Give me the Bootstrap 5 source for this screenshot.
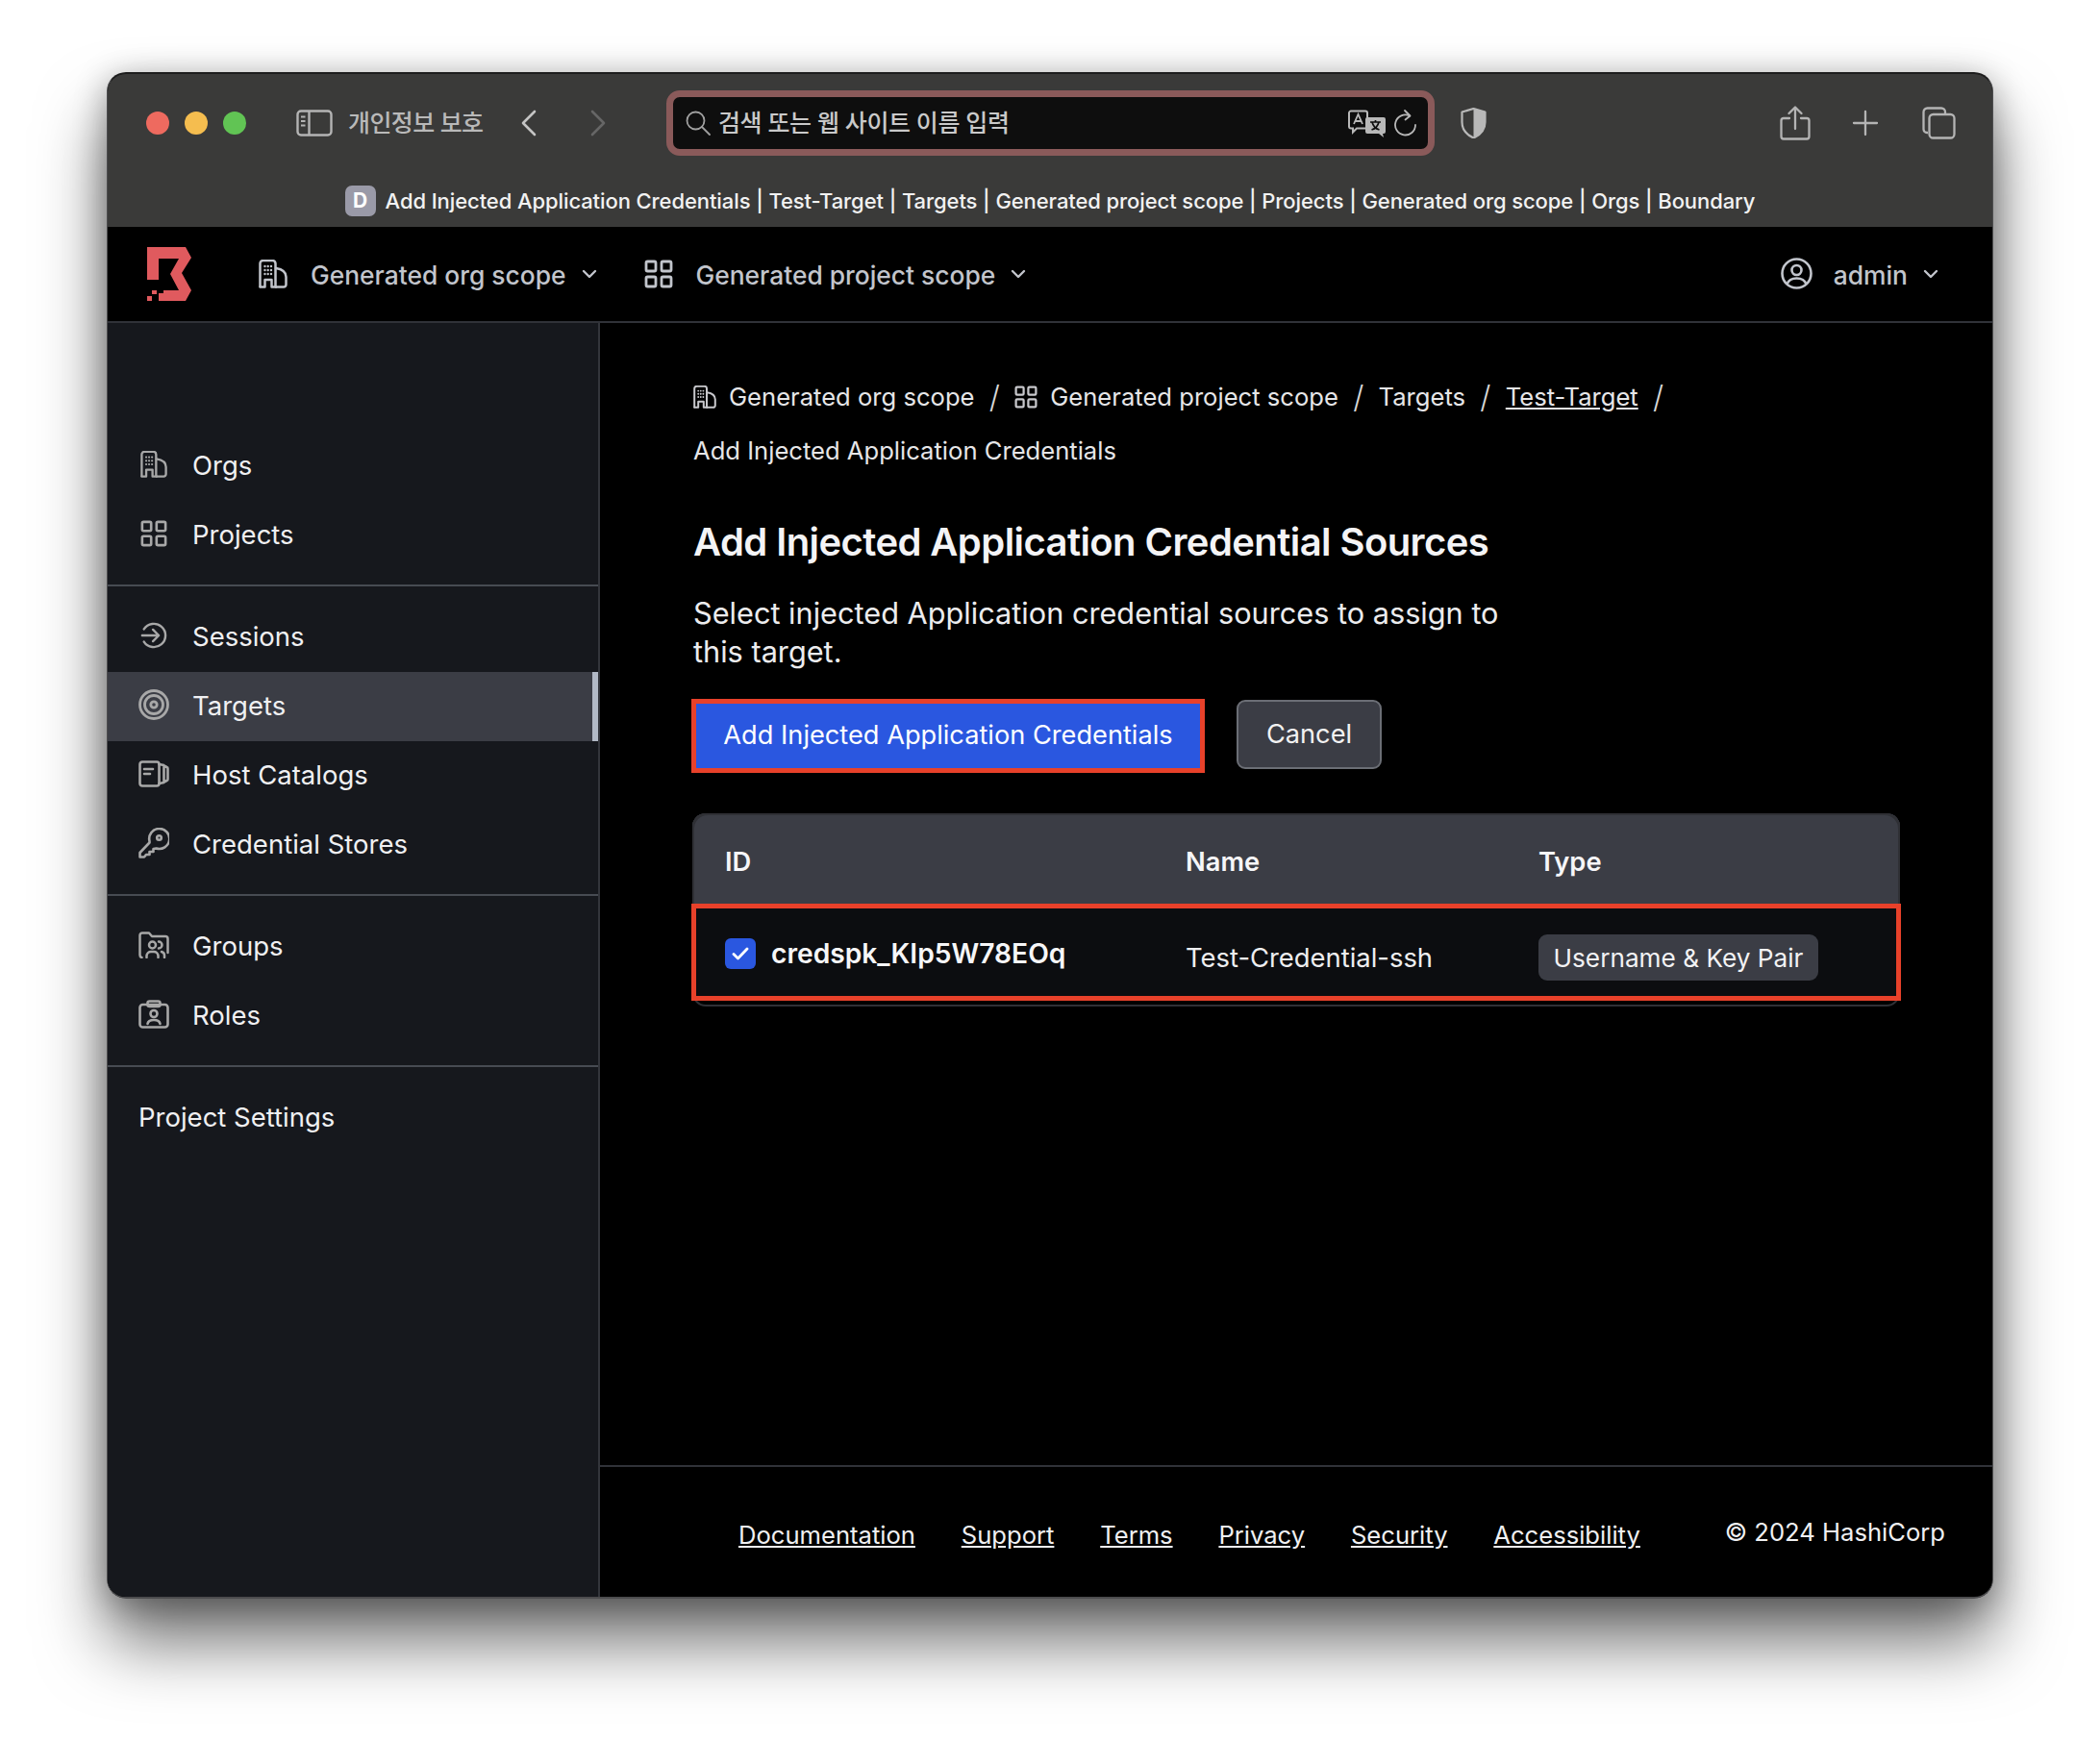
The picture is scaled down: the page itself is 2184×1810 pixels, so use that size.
<!DOCTYPE html>
<html lang="en">
<head>
  <meta charset="UTF-8" />
  <title>Add Injected Application Credentials</title>
  <link href="https://cdn.jsdelivr.net/npm/bootstrap@5.3.0/dist/css/bootstrap.min.css" rel="stylesheet"/>
  <style>
    html, body { height: 100%; }
    body { background: #fff; font-family: Inter, "Noto Sans CJK KR", sans-serif; padding: 75px 111px 0; overflow: hidden; }
    svg { flex: none; display: block; }
    .win { height: 1588px; border: 1px solid #4c4c4e; border-width: 2px 1px; border-top-color: #1d1d1d; border-radius: 20px; overflow: hidden; display: flex; flex-direction: column; background: #000; }
    .win-wrap { border-radius: 20px; box-shadow: 0 46px 70px rgba(0,0,0,.55), 0 6px 34px rgba(0,0,0,.32); }

    .toolbar { height: 159px; flex: none; background: #3a3a39; padding: 17px 0 0 40px; }
    .tool-row { height: 68px; }
    .light { width: 24px; height: 24px; border-radius: 50%; margin-right: 16px; }
    .side-toggle { margin-left: 36px; }
    .privacy { color: #b9b9b9; font-size: 25px; font-weight: 500; margin: 0 38px 0 16px; padding-top: 2px; letter-spacing: -.6px; width: 141px; white-space: nowrap; }
    .addr { width: 799px; height: 68px; margin: 0 27px 0 62px; background: #0e0e0e; border: 7px solid #8a5a5a; border-radius: 14px; padding: 0 11px 0 13px; color: #c9c9c9; font-size: 25px; font-weight: 500; letter-spacing: -.4px; }
    .addr span { padding-top: 2px; }
    .title-row { height: 32px; margin: 31px 0 0 -40px; color: #f2f2f2; font-size: 22px; font-weight: 500; letter-spacing: -.09px; white-space: nowrap; }
    .fav { width: 32px; height: 32px; border-radius: 7px; background: #9a9aa8; color: #fff; font-size: 21px; font-weight: 700; margin-right: 10px; }

    .topnav { height: 100px; flex: none; background: #000; border-bottom: 2px solid #303238; padding: 0 56px 0 41px; color: #c2c5cc; font-size: 26.4px; font-weight: 500; }
    .topnav span { padding-top: 4px; }
    .scope { color: #c2c5cc; margin-left: 24px; }
    .scope-first { margin-left: 70px; }
    .scope-second { margin-left: 49px; }
    .admin-block { gap: 22px; }

    .body-row { flex: 1; min-height: 0; }
    .side { width: 512px; flex: none; background: #16181d; border-right: 2px solid #33353b; padding-top: 113px; }
    .side-link { height: 72px; padding: 0 0 0 32px; color: #f0f0f2; font-size: 27.5px; gap: 24px; position: relative; }
    .side-link:hover { color: #f0f0f2; }
    .side-link svg { color: #a8a8a8; margin-top: -5px; }
    .side-link.on { background: #3b3d45; }
    .side-link.on::after { content: ""; position: absolute; right: 0; top: 0; bottom: 0; width: 6px; background: #b2b9c6; }
    .side-sep { height: 2px; background: #474b52; margin: 15px 0 17px; opacity: 1; border: 0; }

    .content { flex: 1; min-width: 0; }
    .page { flex: 1; padding: 49px 95px 0 97px; color: #f0f0f2; }
    .crumbs { line-height: 56px; font-size: 25.6px; color: #e6e6e8; margin: 0; padding: 0; list-style: none; }
    .crumbs svg { color: #c8c8cc; margin-right: 13px; }
    .crumbs a { color: #e6e6e8; }
    .crumb-item { height: 56px; }
    .crumb-item.sep::after { content: "/"; font-size: 32px; font-weight: 300; color: #d8d8d8; margin: 0 15.3px; }
    .page-title { font-size: 40px; line-height: 48px; font-weight: 600; color: #f4f4f6; margin: 43px 0 0; letter-spacing: -.58px; }
    .page-text { font-size: 30.7px; line-height: 40px; margin: 30px 0 0; width: 860px; color: #ececee; }
    .acts { margin-top: 29px; gap: 33px; }
    .btn-add, .btn-add:hover { background: #2a57e0; border: 5px solid #e8412a; border-radius: 0; height: 77px; width: 534px; color: #fff; font-size: 27.2px; margin-left: -2px; padding: 0 0 1px; }
    .btn-cancel, .btn-cancel:hover { background: #3b3d45; border: 2px solid #6b6e75; border-radius: 9px; height: 72px; width: 151px; color: #f2f2f2; font-size: 27.2px; margin-top: 1px; padding: 1px 0 0; }

    .cred-wrap { margin-top: 42px; width: 1256px; margin-left: -1px; box-shadow: inset 0 0 0 2px #2f3035; border-radius: 14px; height: 201px; }
    .cred-table { --bs-table-bg: transparent; color: #f4f4f6; margin: 0 0 0 -1px; width: 1258px; max-width: none; table-layout: fixed; font-size: 27.4px; border-collapse: separate; border-spacing: 0; }
    .cred-table th, .cred-table td { border: 0; padding: 0 0 0 34px; vertical-align: middle; }
    .cred-table thead th { background: #3b3d45; background-clip: padding-box; height: 94px; padding-top: 8px; font-weight: 600; color: #f6f6f8; font-size: 27.3px; box-shadow: inset 0 2px 0 #2f3035; }
    .cred-table thead th:first-child { border-left: 1px solid transparent; border-top-left-radius: 14px; box-shadow: inset 2px 2px 0 #2f3035; }
    .cred-table thead th:last-child { border-right: 1px solid transparent; border-top-right-radius: 14px; box-shadow: inset -2px 2px 0 #2f3035; }
    .cred-row td { background: #0c0d10; height: 101px; padding-top: 13px; color: #eeeef0; border-top: 5px solid #e8412a; border-bottom: 5px solid #e8412a; }
    .cred-row td:first-child { border-left: 5px solid #e8412a; padding: 11px 0 0 30px; }
    .cred-row td:last-child { border-right: 5px solid #e8412a; padding-top: 11px; }
    .check { width: 32px; height: 32px; background: #2a57e0; border-radius: 6px; margin-right: 16px; }
    .cred-id { font-weight: 600; font-size: 28.2px; color: #f6f6f8; position: relative; top: -4px; }
    .type-tag { background: #3b3d45; border-radius: 9px; height: 48px; width: 291px; font-size: 26.2px; color: #f2f2f4; font-weight: 400; padding: 2px 0 0; --bs-badge-padding-x: 0; }

    .foot { height: 137px; flex: none; border-top: 2px solid #303238; padding: 0 49px 0 144px; font-size: 25.6px; color: #f0f0f2; }
    .foot-links { gap: 47.8px; margin-top: 52px; }
    .foot a { color: #f0f0f2; }
    .copy { margin-top: 49px; }
  </style>
</head>
<body>
  <svg width="0" height="0" style="position:absolute">
    <symbol id="ic-org" viewBox="0 0 30 30" fill="none" stroke="currentColor" stroke-width="2.5" stroke-linecap="round" stroke-linejoin="round">
      <path d="M1.5 28V4a3 3 0 0 1 3-3h10a3 3 0 0 1 3 3v24"/><path d="M1.500 28.500h5M13.500 28.500h4.500M6.500 28.500V21h7v7.500"/><path d="M18 9c6 1 10.500 4 10.500 9v8a2.500 2.500 0 0 1-2.500 2.500h-8"/>
      <path d="M6.500 7h0M9.700 7h0M13 7h0M6.500 11h0M9.700 11h0M13 11h0M6.500 15h0M9.700 15h0M13 15h0" stroke-width="2.400"/>
    </symbol>
    <symbol id="ic-grid" viewBox="0 0 30 30" fill="none" stroke="currentColor" stroke-width="2.8" stroke-linejoin="round">
      <rect x="2" y="2" width="10" height="10" rx="1.5"/><rect x="18" y="2" width="10" height="10" rx="1.5"/><rect x="2" y="18" width="10" height="10" rx="1.5"/><rect x="18" y="18" width="10" height="10" rx="1.5"/>
    </symbol>
    <symbol id="ic-session" viewBox="0 0 30 30" fill="none" stroke="currentColor" stroke-width="2.6" stroke-linecap="round" stroke-linejoin="round">
      <path d="M4 8A13 13 0 1 1 4 22"/><path d="M2 15h18M14 8.5l6.5 6.5-6.5 6.5"/>
    </symbol>
    <symbol id="ic-target" viewBox="0 0 32 32" fill="none" stroke="currentColor" stroke-width="2.8">
      <circle cx="16" cy="16" r="14.500"/><circle cx="16" cy="16" r="9.500"/><circle cx="16" cy="16" r="3.200"/>
    </symbol>
    <symbol id="ic-host" viewBox="0 0 32 28" fill="none" stroke="currentColor" stroke-width="2.6" stroke-linecap="round" stroke-linejoin="round">
      <rect x="1.500" y="1.500" width="20" height="25" rx="2.500"/><path d="M6 9h9M6 14h6"/><path d="M21.500 4l5 1v18l-5 1M26.500 5.500l3 1.500a1.500 1.500 0 0 1 1 1.500v11a1.500 1.500 0 0 1-1 1.500l-3 1.500"/>
    </symbol>
    <symbol id="ic-key" viewBox="0 0 32 32" fill="none" stroke="currentColor" stroke-width="2.6" stroke-linecap="round" stroke-linejoin="round">
      <path d="M11.500 14a10.500 10.500 0 1 1 7 7.500l-3 .5v3h-4v3H8l-2 2.500H1.500v-4.500l10-10.500z"/><circle cx="21.500" cy="10.500" r="2.300"/>
    </symbol>
    <symbol id="ic-groups" viewBox="0 0 32 28" fill="none" stroke="currentColor" stroke-width="2.5" stroke-linecap="round" stroke-linejoin="round">
      <path d="M3.500 27a2.500 2.500 0 0 1-2-2.500V4A2.500 2.500 0 0 1 4 1.500h7l3 3.500h14a2.500 2.500 0 0 1 2.500 2.500V22"/>
      <circle cx="14.500" cy="14" r="3.500"/><path d="M8.500 27v-2a4.500 4.500 0 0 1 4.500-4h3a4.500 4.500 0 0 1 4.500 4v2"/><path d="M21 10.500a3.500 3.500 0 0 1 0 7M24 21a4 4 0 0 1 3 4v2"/>
    </symbol>
    <symbol id="ic-roles" viewBox="0 0 32 30" fill="none" stroke="currentColor" stroke-width="2.6" stroke-linecap="round" stroke-linejoin="round">
      <rect x="1.500" y="5" width="29" height="23.500" rx="3"/><rect x="9.500" y="1.500" width="13" height="5.500" rx="2"/>
      <circle cx="16" cy="14.500" r="3.500"/><path d="M9.500 25c.5-3 3-4 6.500-4s6 1 6.500 4"/>
    </symbol>
    <symbol id="ic-chev" viewBox="0 0 16 10" fill="none" stroke="currentColor" stroke-width="2.4" stroke-linecap="round" stroke-linejoin="round">
      <path d="M2 2l6 6 6-6"/>
    </symbol>
  </svg>

  <div class="win-wrap">
    <div class="win">
      <!-- safari toolbar -->
      <div class="toolbar">
        <div class="tool-row d-flex align-items-center">
          <span class="light" style="background:#ee6a5f"></span>
          <span class="light" style="background:#f5bd4f"></span>
          <span class="light" style="background:#61c454"></span>
          <svg class="side-toggle" width="38" height="28" viewBox="0 0 38 28" fill="none" stroke="#b4b4b4" stroke-width="2.400"><rect x="1.500" y="1.500" width="35" height="25" rx="3.500"/><path d="M13.500 2v24"/><path d="M5 7.500h4.500M5 12h4.500M5 16.500h4.500" stroke-width="2"/></svg>
          <span class="privacy">개인정보 보호</span>
          <svg width="18" height="28" viewBox="0 0 18 28" fill="none" stroke="#c4c4c4" stroke-width="2.600" stroke-linecap="round" stroke-linejoin="round"><path d="M15 2L3 14l12 12"/></svg>
          <svg style="margin-left:54px" width="18" height="28" viewBox="0 0 18 28" fill="none" stroke="#666" stroke-width="2.600" stroke-linecap="round" stroke-linejoin="round"><path d="M3 2l12 12L3 26"/></svg>
          <div class="addr d-flex align-items-center">
            <svg width="26" height="26" viewBox="0 0 26 26" fill="none" stroke="#a0a0a0" stroke-width="1.800" stroke-linecap="round"><circle cx="10.500" cy="10.500" r="9"/><path d="M17 17l8 8"/></svg>
            <span class="ms-2">검색 또는 웹 사이트 이름 입력</span>
            <svg class="ms-auto" width="40" height="29" viewBox="0 0 40 29" fill="none"><path d="M3 1.500h15a2 2 0 0 1 2 2v14a2 2 0 0 1-2 2H9l-4 4v-4H3a2 2 0 0 1-2-2v-14a2 2 0 0 1 2-2z" stroke="#b8b8b8" stroke-width="2"/><path d="M6 15l4.500-10 4.500 10M7.500 12h6" stroke="#b8b8b8" stroke-width="1.800"/><path d="M20 8h17a2 2 0 0 1 2 2v13a2 2 0 0 1-2 2h-1l1 4-5-4H20a2 2 0 0 1-2-2V10a2 2 0 0 1 2-2z" fill="#b8b8b8"/><path d="M23 13h11M28.500 11v2M32 13c-1 4-4 7-7.500 8M25 13c1 4 4 7 7.500 8" stroke="#0e0e0e" stroke-width="1.700"/></svg>
            <svg class="ms-2" width="24" height="30" viewBox="0 0 24 30" fill="none" stroke="#b8b8b8" stroke-width="1.800" stroke-linecap="round" stroke-linejoin="round"><path d="M16 7.500A10.500 10.500 0 1 0 22 17"/><path d="M11 2l5.500 5.500-5 4"/></svg>
          </div>
          <svg width="27" height="32" viewBox="0 0 27 32" fill="none"><path d="M13.500 1L25.500 4.500V15c0 8-5.500 13.500-12 16.500C7 28.500 1.500 23 1.500 15V4.500z" stroke="#b8b8b8" stroke-width="2.200" stroke-linejoin="round"/><path d="M13.500 1L25.500 4.500V15c0 8-5.500 13.500-12 16.500z" fill="#b8b8b8"/></svg>
          <svg style="margin-left:305px" width="32" height="36" viewBox="0 0 32 36" fill="none" stroke="#b4b4b4" stroke-width="2.300" stroke-linecap="round" stroke-linejoin="round"><path d="M10 13H4a2.500 2.500 0 0 0-2.500 2.500v16.500A2.500 2.500 0 0 0 4 34.500h24a2.500 2.500 0 0 0 2.500-2.500V15.500A2.500 2.500 0 0 0 28 13h-6"/><path d="M16 24V2M9.500 8L16 1.500 22.500 8"/></svg>
          <svg style="margin-left:43px" width="28" height="28" viewBox="0 0 28 28" fill="none" stroke="#b4b4b4" stroke-width="2.300" stroke-linecap="round"><path d="M14 2v24M2 14h24"/></svg>
          <svg style="margin-left:45px" width="35" height="34" viewBox="0 0 35 34" fill="none" stroke="#b4b4b4" stroke-width="2.300" stroke-linejoin="round"><path d="M6 27H5a3.500 3.500 0 0 1-3.500-3.500v-18A4 4 0 0 1 5.500 1.500H20A4 4 0 0 1 24 5.500V7"/><rect x="7.500" y="8" width="26" height="24.500" rx="4"/></svg>
        </div>
        <div class="title-row d-flex align-items-center justify-content-center">
          <span class="fav d-flex align-items-center justify-content-center">D</span>
          <span>Add Injected Application Credentials | Test-Target | Targets | Generated project scope | Projects | Generated org scope | Orgs | Boundary</span>
        </div>
      </div>

      <!-- app header -->
      <nav class="topnav d-flex align-items-center">
        <svg width="46" height="56" viewBox="0 0 46 56" fill="#e05a5e"><path d="M0 0H40L46 11 36 27 46 45 40 56H12V48H17V45H33L24 28 33 12H12V34H0Z"/><path d="M5 45h5v4H5zM0 51h5v5H0z"/></svg>
        <div class="scope scope-first d-flex align-items-center gap-4">
          <svg width="30" height="30"><use href="#ic-org"/></svg>
          <span>Generated org scope</span>
        </div>
        <svg class="ms-3" width="16" height="10"><use href="#ic-chev"/></svg>
        <div class="scope scope-second d-flex align-items-center gap-4">
          <svg width="30" height="30"><use href="#ic-grid"/></svg>
          <span>Generated project scope</span>
        </div>
        <svg class="ms-3" width="16" height="10"><use href="#ic-chev"/></svg>
        <div class="admin-block ms-auto d-flex align-items-center">
          <svg width="33" height="33" viewBox="0 0 33 33" fill="none" stroke="currentColor" stroke-width="2.600"><circle cx="16.500" cy="16.500" r="15"/><circle cx="16.500" cy="13" r="5"/><path d="M6.500 27.500c1.500-4 5-6 10-6s8.500 2 10 6"/></svg>
          <span>admin</span>
        </div>
        <svg class="ms-3" width="16" height="10"><use href="#ic-chev"/></svg>
      </nav>

      <div class="body-row d-flex">
        <!-- sidebar -->
        <aside class="side">
          <nav class="nav flex-column">
            <a class="nav-link side-link d-flex align-items-center" href="#"><svg width="32" height="28"><use href="#ic-org"/></svg>Orgs</a>
            <a class="nav-link side-link d-flex align-items-center" href="#"><svg width="32" height="28"><use href="#ic-grid"/></svg>Projects</a>
          </nav>
          <hr class="side-sep">
          <nav class="nav flex-column">
            <a class="nav-link side-link d-flex align-items-center" href="#"><svg width="32" height="28"><use href="#ic-session"/></svg>Sessions</a>
            <a class="nav-link side-link on d-flex align-items-center" href="#"><svg width="32" height="32"><use href="#ic-target"/></svg>Targets</a>
            <a class="nav-link side-link d-flex align-items-center" href="#"><svg width="32" height="28"><use href="#ic-host"/></svg>Host Catalogs</a>
            <a class="nav-link side-link d-flex align-items-center" href="#"><svg width="32" height="32"><use href="#ic-key"/></svg>Credential Stores</a>
          </nav>
          <hr class="side-sep">
          <nav class="nav flex-column">
            <a class="nav-link side-link d-flex align-items-center" href="#"><svg width="32" height="28"><use href="#ic-groups"/></svg>Groups</a>
            <a class="nav-link side-link d-flex align-items-center" href="#"><svg width="32" height="30"><use href="#ic-roles"/></svg>Roles</a>
          </nav>
          <hr class="side-sep">
          <nav class="nav flex-column">
            <a class="nav-link side-link d-flex align-items-center" href="#">Project Settings</a>
          </nav>
        </aside>

        <main class="content d-flex flex-column">
          <div class="page">
            <ol class="crumbs d-flex flex-wrap">
              <li class="crumb-item sep d-flex align-items-center"><svg width="24" height="24"><use href="#ic-org"/></svg>Generated org scope</li>
              <li class="crumb-item sep d-flex align-items-center"><svg width="24" height="24"><use href="#ic-grid"/></svg>Generated project scope</li>
              <li class="crumb-item sep d-flex align-items-center">Targets</li>
              <li class="crumb-item sep d-flex align-items-center"><a href="#">Test-Target</a></li>
              <li class="crumb-item w-100">Add Injected Application Credentials</li>
            </ol>
            <h1 class="page-title">Add Injected Application Credential Sources</h1>
            <p class="page-text">Select injected Application credential sources to assign to this target.</p>
            <div class="acts d-flex align-items-start">
              <button type="button" class="btn btn-add">Add Injected Application Credentials</button>
              <button type="button" class="btn btn-cancel">Cancel</button>
            </div>
            <div class="cred-wrap">
              <table class="table cred-table">
                <colgroup><col style="width:480px"><col style="width:367px"><col></colgroup>
                <thead>
                  <tr><th>ID</th><th>Name</th><th>Type</th></tr>
                </thead>
                <tbody>
                  <tr class="cred-row">
                    <td>
                      <div class="d-flex align-items-center">
                        <span class="check d-flex align-items-center justify-content-center cred-id">
                          <svg width="20" height="16" viewBox="0 0 20 16" fill="none" stroke="#fff" stroke-width="2.800" stroke-linecap="round" stroke-linejoin="round"><path d="M3 8.500l4.500 4.500L17 3"/></svg>
                        </span>
                        <span class="cred-id">credspk_KIp5W78EOq</span>
                      </div>
                    </td>
                    <td>Test-Credential-ssh</td>
                    <td><span class="badge type-tag d-inline-flex align-items-center justify-content-center">Username &amp; Key Pair</span></td>
                  </tr>
                </tbody>
              </table>
            </div>
          </div>
          <footer class="foot d-flex justify-content-between">
            <div class="foot-links d-flex">
              <a href="#">Documentation</a><a href="#">Support</a><a href="#">Terms</a><a href="#">Privacy</a><a href="#">Security</a><a href="#">Accessibility</a>
            </div>
            <div class="copy">© 2024 HashiCorp</div>
          </footer>
        </main>
      </div>
    </div>
  </div>
</body>
</html>
